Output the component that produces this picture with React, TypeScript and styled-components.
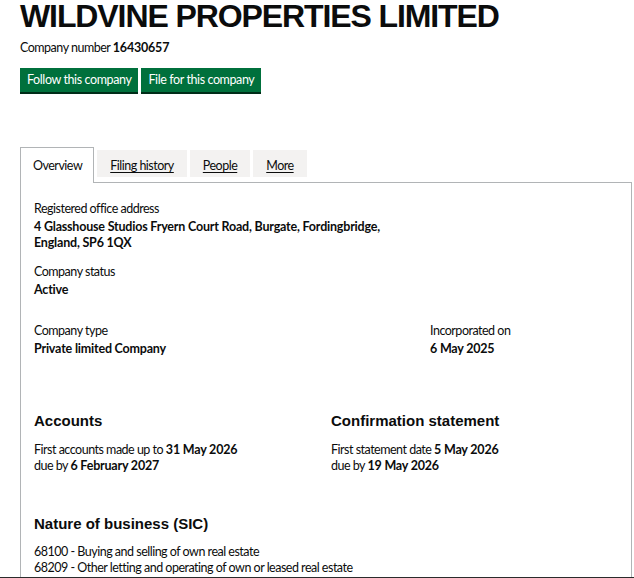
import styled, { createGlobalStyle } from 'styled-components'

const GlobalStyle = createGlobalStyle`
  * { box-sizing: border-box; }
  body {
    margin: 0;
    background: #ffffff;
    color: #0b0c0c;
    font-family: Lato, "Noto Sans", Arial, sans-serif;
    letter-spacing: -0.5px;
  }
  strong, b {
    font-weight: 700;
    letter-spacing: -0.2px;
  }
`

const tabs = [
  { label: 'Overview', active: true },
  { label: 'Filing history' },
  { label: 'People' },
  { label: 'More' },
]

export default function App() {
  return (
    <Frame>
      <GlobalStyle />
      <Page>
        <Title>WILDVINE PROPERTIES LIMITED</Title>
        <CompanyNumber>
          Company number <strong>16430657</strong>
        </CompanyNumber>
        <Actions>
          <Button>Follow this company</Button>
          <Button>File for this company</Button>
        </Actions>

        <TabList>
          {tabs.map((t) => (
            <Tab key={t.label} $active={!!t.active}>
              {t.active ? t.label : <TabLink href="#">{t.label}</TabLink>}
            </Tab>
          ))}
        </TabList>

        <Panel>
          <Field $gapAfter={13}>
            <Label>Registered office address</Label>
            <Value>
              4 Glasshouse Studios Fryern Court Road, Burgate, Fordingbridge,
              <br />
              England, SP6 1QX
            </Value>
          </Field>

          <Field $gapAfter={25}>
            <Label>Company status</Label>
            <Value>Active</Value>
          </Field>

          <TwoCol $first={396}>
            <Field>
              <Label>Company type</Label>
              <Value>Private limited Company</Value>
            </Field>
            <Field>
              <Label>Incorporated on</Label>
              <Value>6 May 2025</Value>
            </Field>
          </TwoCol>

          <TwoCol $first={297} $top={54}>
            <Section>
              <Heading>Accounts</Heading>
              <Text>
                First accounts made up to <strong>31 May 2026</strong>
                <br />
                due by <strong>6 February 2027</strong>
              </Text>
            </Section>
            <Section>
              <Heading>Confirmation statement</Heading>
              <Text>
                First statement date <strong>5 May 2026</strong>
                <br />
                due by <strong>19 May 2026</strong>
              </Text>
            </Section>
          </TwoCol>

          <Section $top={40}>
            <Heading>Nature of business (SIC)</Heading>
            <List>
              <li>68100 - Buying and selling of own real estate</li>
              <li>68209 - Other letting and operating of own or leased real estate</li>
            </List>
          </Section>
        </Panel>
      </Page>
    </Frame>
  )
}

const Frame = styled.div`
  height: 578px;
  overflow: hidden;
  border-bottom: 1px solid #2b2b2b;
`
const Page = styled.div`
  padding-left: 20px;
  width: 632px;
`
const Title = styled.h1`
  margin: 0;
  font-family: "Liberation Sans", Arial, sans-serif;
  font-size: 32px;
  line-height: 32px;
  font-weight: 700;
  letter-spacing: -1.1px;
`
const CompanyNumber = styled.p`
  margin: 8px 0 0;
  font-size: 12.5px;
  line-height: 16px;
`
const Actions = styled.div`
  display: flex;
  gap: 3px;
  margin-top: 12px;
`
const Button = styled.button`
  height: 24px;
  padding: 0 7px;
  border: 0;
  border-radius: 0;
  background: #00703c;
  box-shadow: 0 2px 0 #002d18;
  color: #ffffff;
  font-family: Lato, "Noto Sans", Arial, sans-serif;
  font-size: 12.5px;
  letter-spacing: -0.4px;
  line-height: 24px;
  cursor: pointer;
`
const TabList = styled.ul`
  display: flex;
  align-items: flex-start;
  gap: 3px;
  list-style: none;
  margin: 55px 0 -1px;
  padding: 0;
  position: relative;
  z-index: 1;
`
const Tab = styled.li<{ $active: boolean }>`
  font-size: 12.5px;
  line-height: 16px;
  ${(p) =>
    p.$active
      ? `
    height: 36px;
    padding: 10px 11px 0 12px;
    background: #ffffff;
    border: 1px solid #b1b4b6;
    border-bottom: 0;
  `
      : `
    height: 27px;
    margin-top: 3px;
    padding: 8px 13px 0;
    background: #f3f2f1;
  `}
`
const TabLink = styled.a`
  color: #0b0c0c;
  text-decoration: underline;
  text-underline-offset: 2px;
`
const Panel = styled.div`
  width: 612px;
  border: 1px solid #b1b4b6;
  border-bottom: 0;
  padding: 18px 13px 40px;
  min-height: 420px;
`
const Field = styled.dl<{ $gapAfter?: number }>`
  margin: 0 0 ${(p) => p.$gapAfter ?? 0}px;
`
const Label = styled.dt`
  font-size: 12.5px;
  line-height: 16px;
`
const Value = styled.dd`
  margin: 2px 0 0;
  font-size: 12.5px;
  line-height: 16px;
  font-weight: 700;
  letter-spacing: -0.2px;
`
const TwoCol = styled.div<{ $first: number; $top?: number }>`
  display: grid;
  grid-template-columns: ${(p) => p.$first}px 1fr;
  margin-top: ${(p) => p.$top ?? 0}px;
`
const Section = styled.section<{ $top?: number }>`
  margin-top: ${(p) => p.$top ?? 0}px;
`
const Heading = styled.h2`
  margin: 0;
  font-family: "Liberation Sans", Arial, sans-serif;
  font-size: 15px;
  line-height: 20px;
  font-weight: 700;
  letter-spacing: 0;
`
const Text = styled.p`
  margin: 11px 0 0;
  font-size: 12.5px;
  line-height: 16px;
`
const List = styled.ul`
  list-style: none;
  margin: 10px 0 0;
  padding: 0;
  font-size: 12.5px;
  line-height: 16px;
`
